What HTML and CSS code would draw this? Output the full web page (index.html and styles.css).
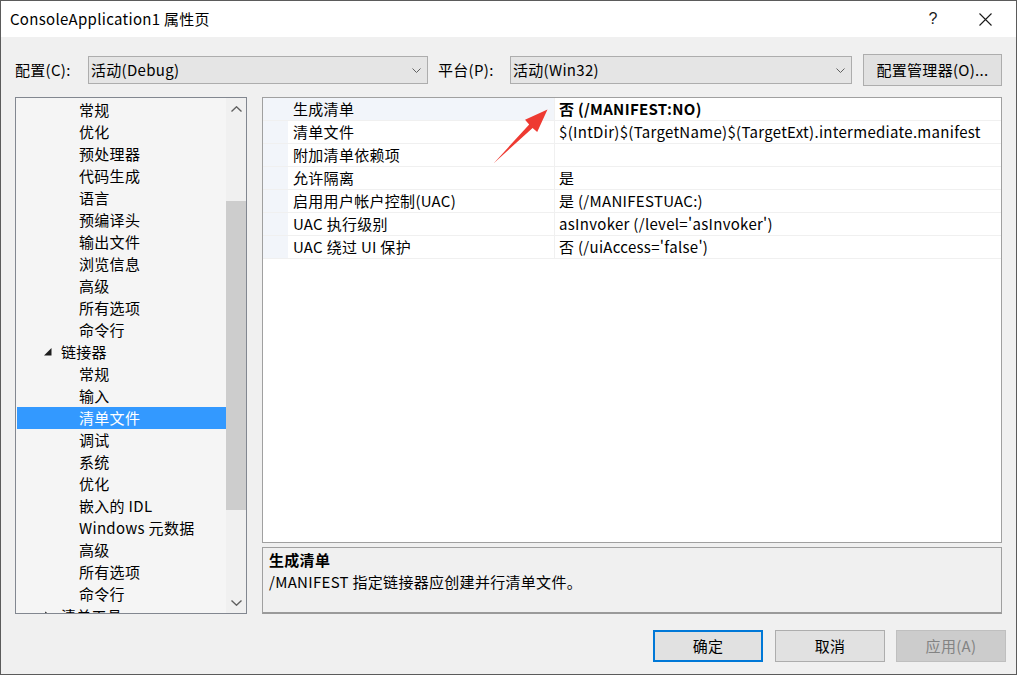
FILE: index.html
```html
<!DOCTYPE html>
<html lang="zh-CN">
<head>
<meta charset="utf-8">
<title>ConsoleApplication1 属性页</title>
<link rel="stylesheet" href="styles.css">
</head>
<body>
<div class="window">
  <div class="titlebar">
    <span class="title">ConsoleApplication1 属性页</span>
    <span class="tb-help">?</span>
    <span class="tb-close"><svg width="13" height="13" viewBox="0 0 13 13"><path d="M0.5 0.5 L12.5 12.5 M12.5 0.5 L0.5 12.5" stroke="#1a1a1a" stroke-width="1.1" fill="none"/></svg></span>
  </div>

  <div class="config-row">
    <span class="lbl lbl-config">配置(C):</span>
    <div class="combo combo-config"><span class="combo-text">活动(Debug)</span><svg class="chev" width="9" height="5" viewBox="0 0 9 5"><path d="M0.5 0.5 L4.5 4.5 L8.5 0.5" stroke="#606060" fill="none"/></svg></div>
    <span class="lbl lbl-platform">平台(P):</span>
    <div class="combo combo-platform"><span class="combo-text">活动(Win32)</span><svg class="chev" width="9" height="5" viewBox="0 0 9 5"><path d="M0.5 0.5 L4.5 4.5 L8.5 0.5" stroke="#606060" fill="none"/></svg></div>
    <button class="btn btn-manager">配置管理器(O)...</button>
  </div>

  <div class="main">
    <div class="tree">
      <ul class="tree-list">
        <li class="l2">常规</li>
        <li class="l2">优化</li>
        <li class="l2">预处理器</li>
        <li class="l2">代码生成</li>
        <li class="l2">语言</li>
        <li class="l2">预编译头</li>
        <li class="l2">输出文件</li>
        <li class="l2">浏览信息</li>
        <li class="l2">高级</li>
        <li class="l2">所有选项</li>
        <li class="l2">命令行</li>
        <li class="l1"><svg class="tri" width="8" height="8" viewBox="0 0 8 8"><polygon points="7.5,0 7.5,7.5 0,7.5" fill="#1e1e1e"/></svg>链接器</li>
        <li class="l2">常规</li>
        <li class="l2">输入</li>
        <li class="l2 selected">清单文件</li>
        <li class="l2">调试</li>
        <li class="l2">系统</li>
        <li class="l2">优化</li>
        <li class="l2">嵌入的 IDL</li>
        <li class="l2">Windows 元数据</li>
        <li class="l2">高级</li>
        <li class="l2">所有选项</li>
        <li class="l2">命令行</li>
        <li class="l1"><svg class="tri" width="8" height="10" viewBox="0 0 8 10"><polygon points="1.5,1 6,5 1.5,9" fill="none" stroke="#404040"/></svg>清单工具</li>
      </ul>
      <div class="scrollbar">
        <div class="sb-btn"><svg width="11" height="6" viewBox="0 0 11 6"><path d="M0.5 5.5 L5.5 0.8 L10.5 5.5" stroke="#606060" stroke-width="1.4" fill="none"/></svg></div>
        <div class="sb-track"><div class="sb-thumb"></div></div>
        <div class="sb-btn"><svg width="11" height="6" viewBox="0 0 11 6"><path d="M0.5 0.5 L5.5 5.2 L10.5 0.5" stroke="#606060" stroke-width="1.4" fill="none"/></svg></div>
      </div>
    </div>

    <div class="right">
      <div class="grid">
        <div class="row selected"><div class="gutter"></div><div class="name">生成清单</div><div class="value bold">否 (/MANIFEST:NO)</div></div>
        <div class="row"><div class="gutter"></div><div class="name">清单文件</div><div class="value">$(IntDir)$(TargetName)$(TargetExt).intermediate.manifest</div></div>
        <div class="row"><div class="gutter"></div><div class="name">附加清单依赖项</div><div class="value"></div></div>
        <div class="row"><div class="gutter"></div><div class="name">允许隔离</div><div class="value">是</div></div>
        <div class="row"><div class="gutter"></div><div class="name">启用用户帐户控制(UAC)</div><div class="value">是 (/MANIFESTUAC:)</div></div>
        <div class="row"><div class="gutter"></div><div class="name">UAC 执行级别</div><div class="value">asInvoker (/level='asInvoker')</div></div>
        <div class="row"><div class="gutter"></div><div class="name">UAC 绕过 UI 保护</div><div class="value">否 (/uiAccess='false')</div></div>
      </div>
      <div class="desc">
        <div class="desc-title">生成清单</div>
        <div class="desc-text">/MANIFEST 指定链接器应创建并行清单文件。</div>
      </div>
    </div>
  </div>

  <div class="buttons">
    <button class="btn btn-ok">确定</button>
    <button class="btn btn-cancel">取消</button>
    <button class="btn btn-apply" disabled>应用(A)</button>
  </div>

  <svg class="annot-arrow" width="1017" height="675" viewBox="0 0 1017 675">
    <polygon points="493.5,163.5 529.2,124.4 525,119.8 547.5,109.5 537.2,132 532.6,127.9" fill="#ee3a32"/>
  </svg>
</div>
</body>
</html>
```

FILE: styles.css
```css
* { box-sizing: border-box; }
html, body { margin: 0; padding: 0; }
body {
  font-family: "Noto Sans CJK SC", sans-serif;
  font-size: 15px;
  letter-spacing: 0.3px;
  color: #000;
  background: #f0f0f0;
}
.window {
  position: relative;
  width: 1017px;
  height: 675px;
  border: 1px solid #5b5b5b;
  background: #f0f0f0;
  display: flex;
  flex-direction: column;
  overflow: hidden;
}
.titlebar {
  height: 36px;
  background: #fff;
  display: flex;
  align-items: center;
  padding-left: 9px;
  flex: none;
}
.title { font-size: 15px; line-height: 20px; flex: 1; }
.tb-help { width: 20px; margin-right: 36px; text-align: center; color: #1a1a1a; font-family: "Liberation Sans", sans-serif; font-size: 16px; }
.tb-close { width: 13px; height: 13px; margin-right: 24px; display: flex; }

.config-row {
  margin-top: 17px;
  height: 32px;
  display: flex;
  align-items: center;
  padding-left: 14px;
  flex: none;
}
.lbl { line-height: 20px; }
.lbl-config { width: 73px; }
.lbl-platform { width: 72px; margin-left: 10px; }
.combo {
  height: 28px;
  background: #e5e5e5;
  border: 1px solid #adadad;
  display: flex;
  align-items: center;
  padding-left: 2px;
  padding-right: 6px;
}
.combo-config { width: 340px; }
.combo-platform { width: 342px; }
.combo-text { flex: 1; line-height: 20px; }
.chev { flex: none; }

.btn {
  font-family: inherit;
  font-size: 15px;
  letter-spacing: 0.3px;
  color: #000;
  background: #e1e1e1;
  border: 1px solid #adadad;
  height: 32px;
  padding: 0;
  line-height: 20px;
}
.btn-manager { width: 139px; margin-left: 11px; }

.main {
  margin-top: 11px;
  height: 517px;
  display: flex;
  padding-left: 14px;
  flex: none;
}
.tree {
  width: 232px;
  height: 517px;
  border: 1px solid #828790;
  background: #f5f5f5;
  display: flex;
  overflow: hidden;
}
.tree-list {
  list-style: none;
  margin: 0;
  padding: 1px 0 0 1px;
  width: 210px;
  overflow: hidden;
}
.tree-list li {
  height: 22px;
  line-height: 22px;
  white-space: nowrap;
  display: flex;
  align-items: center;
}
.tree-list li.l2 { padding-left: 62px; }
.tree-list li.l1 { padding-left: 27px; }
.tree-list li.l1 .tri { margin-right: 9px; flex: none; }
.tree-list li.selected { background: #3399ff; color: #fff; }

.scrollbar {
  width: 20px;
  display: flex;
  flex-direction: column;
  background: #f0f0f0;
}
.sb-btn { height: 21px; display: flex; align-items: center; justify-content: center; flex: none; }
.sb-track { flex: 1; }
.sb-thumb { margin-top: 82px; height: 309px; background: #cdcdcd; }

.right {
  margin-left: 15px;
  width: 740px;
  display: flex;
  flex-direction: column;
  gap: 4px;
}
.grid {
  height: 446px;
  border: 1px solid #a0a0a0;
  background: #fff;
}
.row {
  display: flex;
  height: 23px;
  border-bottom: 1px solid #f0f0f0;
  line-height: 22px;
}
.gutter { width: 25px; background: #f2f5fa; flex: none; }
.name { width: 266px; padding-left: 5px; flex: none; white-space: nowrap; }
.row.selected .name { background: #f2f5fa; }
.value { flex: 1; padding-left: 4px; border-left: 1px solid #f0f0f0; white-space: nowrap; }
.value.bold { font-weight: bold; }

.desc {
  height: 67px;
  border: 1px solid #a0a0a0;
  border-bottom: 2px solid #9a9a9a;
  background: #f0f0f0;
  padding: 1px 0 0 6px;
}
.desc-title { font-weight: bold; line-height: 22px; }
.desc-text { line-height: 22px; }

.buttons {
  margin-top: 16px;
  height: 32px;
  display: flex;
  justify-content: flex-end;
  padding-right: 10px;
  flex: none;
}
.btn-ok { width: 110px; border: 2px solid #0078d7; }
.btn-cancel { width: 110px; margin-left: 12px; }
.btn-apply { width: 110px; margin-left: 11px; background: #cccccc; border-color: #bfbfbf; color: #838383; }

.annot-arrow {
  position: absolute;
  left: -1px;
  top: -1px;
  pointer-events: none;
}
```
